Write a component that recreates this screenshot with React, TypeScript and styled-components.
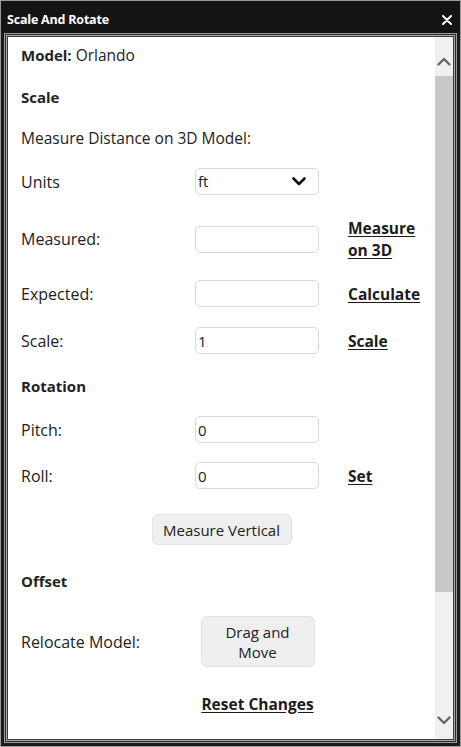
import { styled, createGlobalStyle } from "styled-components";

const GlobalStyle = createGlobalStyle`
  html, body {
    margin: 0;
    padding: 0;
    background: #ffffff;
  }
  * {
    box-sizing: border-box;
  }
`;

interface FieldRowProps {
  label: string;
  value?: string;
  link?: string;
}

function FieldRow({ label, value, link }: FieldRowProps) {
  return (
    <Row>
      <Label>{label}</Label>
      <TextInput defaultValue={value ?? ""} />
      {link ? <ActionLink href="#">{link}</ActionLink> : <span />}
    </Row>
  );
}

function ChevronDown({ color = "#111", stroke = 2.6 }: { color?: string; stroke?: number }) {
  return (
    <svg width="14" height="9" viewBox="0 0 14 9">
      <polyline points="1.5,1.5 7,7 12.5,1.5" fill="none" stroke={color} strokeWidth={stroke} strokeLinecap="round" strokeLinejoin="round" />
    </svg>
  );
}

function ChevronUp({ color = "#666", stroke = 2.4 }: { color?: string; stroke?: number }) {
  return (
    <svg width="14" height="9" viewBox="0 0 14 9">
      <polyline points="1.5,7.5 7,2 12.5,7.5" fill="none" stroke={color} strokeWidth={stroke} strokeLinecap="round" strokeLinejoin="round" />
    </svg>
  );
}

export default function App() {
  return (
    <>
      <GlobalStyle />
      <Window>
        <TitleBar>
          <Title>Scale And Rotate</Title>
          <CloseButton aria-label="close">
            <svg width="10" height="10" viewBox="0 0 10 10">
              <path d="M1 1 L9 9 M9 1 L1 9" stroke="#fff" strokeWidth="2" strokeLinecap="round" />
            </svg>
          </CloseButton>
        </TitleBar>
        <Frame>
          <Inner>
            <Content>
              <Line>
                <b>Model:</b> Orlando
              </Line>
              <Heading $top={20}>Scale</Heading>
              <Line $top={19}>Measure Distance on 3D Model:</Line>

              <Row $top={19}>
                <Label>Units</Label>
                <SelectWrap>
                  <SelectBox>ft</SelectBox>
                  <SelectArrow>
                    <ChevronDown />
                  </SelectArrow>
                </SelectWrap>
                <span />
              </Row>

              <Row $top={22} $tall>
                <Label>Measured:</Label>
                <TextInput defaultValue="" />
                <ActionLink href="#">Measure on 3D</ActionLink>
              </Row>

              <Wrap $top={19}>
                <FieldRow label="Expected:" link="Calculate" />
              </Wrap>
              <Wrap $top={20}>
                <FieldRow label="Scale:" value="1" link="Scale" />
              </Wrap>

              <Heading $top={21}>Rotation</Heading>
              <Wrap $top={19}>
                <FieldRow label="Pitch:" value="0" />
              </Wrap>
              <Wrap $top={19}>
                <FieldRow label="Roll:" value="0" link="Set" />
              </Wrap>

              <Centered $top={25}>
                <GreyButton $width={140}>Measure Vertical</GreyButton>
              </Centered>

              <Heading $top={25}>Offset</Heading>

              <Row $top={24}>
                <Label>Relocate Model:</Label>
                <Cell>
                  <GreyButton $width={114} $tall>
                    Drag and
                    <br />
                    Move
                  </GreyButton>
                </Cell>
                <span />
              </Row>

              <Row $top={23}>
                <span />
                <Cell>
                  <ActionLink href="#">Reset Changes</ActionLink>
                </Cell>
                <span />
              </Row>
            </Content>
            <ScrollBar>
              <ScrollButton>
                <ChevronUp />
              </ScrollButton>
              <Thumb />
              <Track>
                <ChevronDown color="#666" stroke={2.4} />
              </Track>
            </ScrollBar>
          </Inner>
        </Frame>
      </Window>
    </>
  );
}

const Window = styled.div`
  width: 461px;
  height: 747px;
  background: #1c1c1c;
  border: 1px solid #9a9a9a;
  display: flex;
  flex-direction: column;
  font-family: "Open Sans", "Liberation Sans", sans-serif;
  color: #222;
`;

const TitleBar = styled.div`
  height: 32px;
  flex: none;
  display: flex;
  align-items: center;
  justify-content: space-between;
  padding: 5px 8px 0 6px;
  background: #141414;
`;

const Title = styled.div`
  color: #fff;
  font-size: 12.5px;
  font-weight: 700;
  letter-spacing: -0.2px;
`;

const CloseButton = styled.button`
  border: none;
  background: transparent;
  padding: 0;
  margin-top: 1px;
  display: flex;
  cursor: pointer;
`;

const Frame = styled.div`
  flex: 1;
  margin: 0 3px 3px;
  border: 1px solid #9c9c9c;
  padding: 1px;
  background: #2a2a2a;
  display: flex;
  min-height: 0;
`;

const Inner = styled.div`
  flex: 1;
  border: 1px solid #a8a8a8;
  box-shadow: inset 0 0 0 1px #3a3a3a;
  padding: 1px;
  background: #fff;
  display: flex;
  min-height: 0;
`;

const Content = styled.div`
  flex: 1;
  padding: 7px 0 0 13px;
  display: flex;
  flex-direction: column;
  font-size: 15px;
  overflow: hidden;
`;

const Line = styled.div<{ $top?: number }>`
  line-height: 22px;
  margin-top: ${(p) => p.$top ?? 0}px;
  white-space: nowrap;
  font-size: 15.5px;

  b {
    font-weight: 700;
    font-size: 15px;
  }
`;

const Heading = styled(Line)`
  font-weight: 700;
  font-size: 15px;
`;

const Wrap = styled.div<{ $top?: number }>`
  margin-top: ${(p) => p.$top ?? 0}px;
`;

const Row = styled.div<{ $top?: number; $tall?: boolean }>`
  display: grid;
  grid-template-columns: 174px 153px 1fr;
  align-items: center;
  min-height: ${(p) => (p.$tall ? 44 : 27)}px;
  margin-top: ${(p) => p.$top ?? 0}px;
`;

const Label = styled.div`
  line-height: 22px;
  font-size: 16px;
`;

const Cell = styled.div`
  width: 125px;
  display: flex;
  justify-content: center;
`;

const TextInput = styled.input`
  width: 124px;
  height: 27px;
  border: 1px solid #d9d9d9;
  border-radius: 5px;
  background: #fff;
  padding: 0 2px;
  font-family: inherit;
  font-size: 15px;
  color: #222;
  outline: none;
`;

const SelectWrap = styled.div`
  position: relative;
  width: 124px;
  height: 27px;
`;

const SelectBox = styled.div`
  width: 100%;
  height: 100%;
  border: 1px solid #d9d9d9;
  border-radius: 5px;
  padding: 0 2px;
  line-height: 25px;
`;

const SelectArrow = styled.span`
  position: absolute;
  right: 13px;
  top: 9px;
  display: flex;
`;

const ActionLink = styled.a`
  color: #1c1c1c;
  font-weight: 700;
  font-size: 15.5px;
  text-decoration: underline;
  text-underline-offset: 2px;
  line-height: 22px;
  max-width: 76px;
  white-space: normal;

  ${Cell} & {
    max-width: none;
    white-space: nowrap;
  }
`;

const Centered = styled.div<{ $top?: number }>`
  display: flex;
  justify-content: center;
  margin-top: ${(p) => p.$top ?? 0}px;
  padding-right: 13px;
`;

const GreyButton = styled.button<{ $width: number; $tall?: boolean }>`
  width: ${(p) => p.$width}px;
  height: ${(p) => (p.$tall ? 51 : 31)}px;
  background: #efefef;
  border: 1px solid #e2e2e2;
  border-radius: 6px;
  font-family: inherit;
  font-size: 15px;
  line-height: 20px;
  color: #222;
  padding: 0;
  cursor: pointer;
`;

const ScrollBar = styled.div`
  width: 18px;
  flex: none;
  background: #f0f0f0;
  display: flex;
  flex-direction: column;
`;

const ScrollButton = styled.div`
  height: 39px;
  display: flex;
  justify-content: center;
  padding-top: 20px;
`;

const Thumb = styled.div`
  height: 516px;
  background: #c8c8c8;
`;

const Track = styled.div`
  flex: 1;
  display: flex;
  justify-content: center;
  align-items: flex-end;
  padding-bottom: 14px;
`;
